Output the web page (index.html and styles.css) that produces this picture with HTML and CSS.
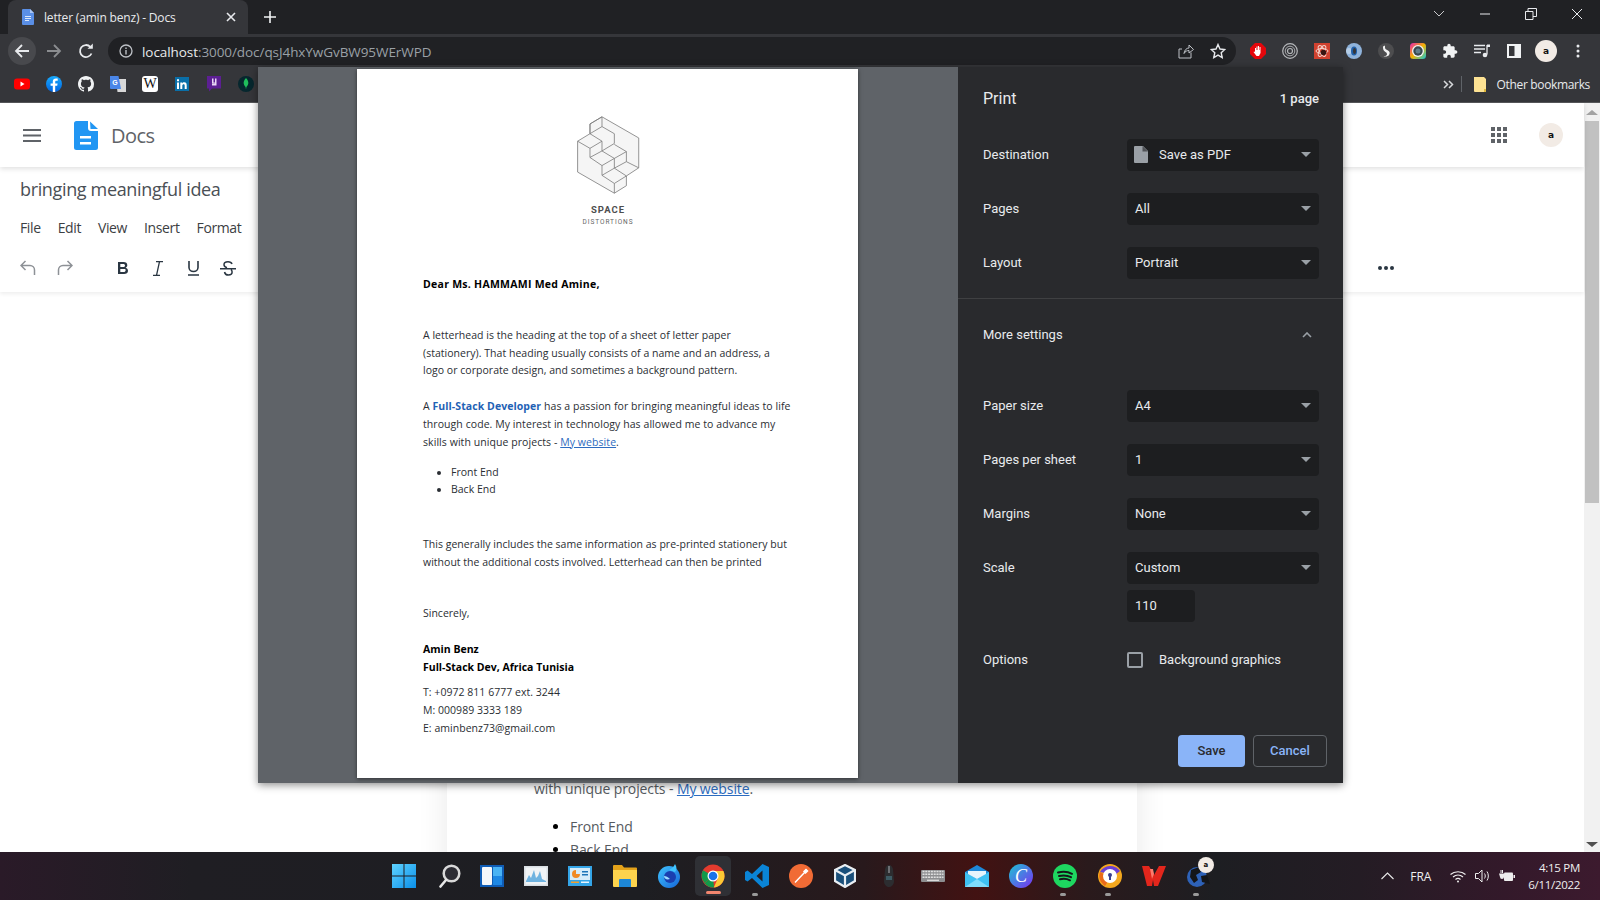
FILE: index.html
```html
<!DOCTYPE html>
<html lang="en">
<head>
<meta charset="utf-8">
<title>letter (amin benz) - Docs</title>
<link rel="stylesheet" href="styles.css">
</head>
<body>
<div class="tabstrip">
  <div class="tab">
    <svg class="tab-icon" viewBox="0 0 12 16"><path d="M1 0h7l4 4v11a1 1 0 0 1-1 1H1a1 1 0 0 1-1-1V1a1 1 0 0 1 1-1z" fill="#5a8fe6"/><path d="M8 0l4 4H8z" fill="#a9c6f5"/><path d="M3 7h6v1H3zM3 9h6v1H3zM3 11h4v1H3z" fill="#dce8fb"/></svg>
    <span class="tab-title">letter (amin benz) - Docs</span>
    <svg class="tab-close" viewBox="0 0 10 10"><path d="M1 1l8 8M9 1l-8 8" stroke="#e8eaed" stroke-width="1.6"/></svg>
  </div>
  <svg class="newtab" viewBox="0 0 12 12"><path d="M6 0v12M0 6h12" stroke="#f1f3f4" stroke-width="1.6"/></svg>
  <div class="winctl">
    <span class="winbtn"><svg width="12" height="8" viewBox="0 0 12 8"><path d="M1 1l5 5 5-5" stroke="#c8c9cb" fill="none"/></svg></span>
    <span class="winbtn"><svg width="12" height="2" viewBox="0 0 12 2"><path d="M1 1h10" stroke="#e8eaed"/></svg></span>
    <span class="winbtn"><svg width="12" height="12" viewBox="0 0 12 12"><path d="M.5 3.500h7.500v8H.5zM3 3.500V.5h8.500v8H8" stroke="#e8eaed" fill="none"/></svg></span>
    <span class="winbtn"><svg width="12" height="12" viewBox="0 0 12 12"><path d="M1 1l10 10M11 1L1 11" stroke="#e8eaed"/></svg></span>
  </div>
</div>

<div class="toolbar">
  <span class="nav nav-on"><svg width="16" height="16" viewBox="0 0 16 16"><path d="M15 8H2M8 2L2 8l6 6" stroke="#e8eaed" stroke-width="1.8" fill="none"/></svg></span>
  <span class="nav"><svg width="16" height="16" viewBox="0 0 16 16"><path d="M1 8h13M8 2l6 6-6 6" stroke="#8b8d90" stroke-width="1.8" fill="none"/></svg></span>
  <span class="nav"><svg width="16" height="16" viewBox="0 0 16 16"><path d="M13.500 10.500A6 6 0 1 1 12.300 3.800" stroke="#e8eaed" stroke-width="1.800" fill="none"/><path d="M9.500 5.800h5.300V.5z" fill="#e8eaed"/></svg></span>
  <div class="omnibox">
    <svg class="info" width="14" height="14" viewBox="0 0 14 14"><circle cx="7" cy="7" r="6" stroke="#bdc1c6" stroke-width="1.300" fill="none"/><path d="M6.300 6h1.400v4.500H6.300zM6.300 3.500h1.400v1.400H6.300z" fill="#bdc1c6"/></svg>
    <span class="url"><span class="url-host">localhost</span>:3000/doc/qsJ4hxYwGvBW95WErWPD</span>
    <svg class="omni-share" width="16" height="16" viewBox="0 0 16 16"><path d="M13 9.500V15H1V6h3M6 10.500C6.500 7 8.500 5 11 5V2l4.500 4.500L11 10V7.500c-2 0-3.800.8-5 3z" stroke="#bdc1c6" fill="none"/></svg>
    <svg class="omni-star" width="16" height="16" viewBox="0 0 16 16"><path d="M8 1.500l2 4.500 4.800.500-3.600 3.200 1 4.800L8 12.100l-4.200 2.400 1-4.800L1.200 6.500 6 6z" stroke="#e8eaed" stroke-width="1.400" fill="none"/></svg>
  </div>
  <div class="exts">
    <span class="ext"><svg width="16" height="16" viewBox="0 0 16 16"><path d="M5 0h6l5 5v6l-5 5H5l-5-5V5z" fill="#e4060b"/><path d="M5 9V5h1v2h.5V3.500h1V7H8V3h1v4h.5V4h1v6l-1.500 3H6.500L3.500 9l.8-.6z" fill="#fff"/></svg></span>
    <span class="ext"><svg width="16" height="16" viewBox="0 0 16 16" fill="none" stroke="#b5b7ba"><circle cx="8" cy="8" r="7.300" stroke-width="1.200"/><circle cx="8" cy="8" r="4.800" stroke-width=".9"/><circle cx="8" cy="8" r="2.500" stroke-width="1.200"/></svg></span>
    <span class="ext"><svg width="16" height="16" viewBox="0 0 16 16"><path d="M0 0h16v16H0z" fill="#d0412f"/><g fill="none" stroke="#f3d2cc"><ellipse cx="8" cy="8" rx="6" ry="2.500"/><ellipse cx="8" cy="8" rx="6" ry="2.500" transform="rotate(60 8 8)"/><ellipse cx="8" cy="8" rx="6" ry="2.500" transform="rotate(120 8 8)"/></g><circle cx="9.500" cy="9.500" r="2.800" fill="#3a1512"/></svg></span>
    <span class="ext"><svg width="16" height="16" viewBox="0 0 16 16"><circle cx="8" cy="8" r="8" fill="#8fb3db"/><circle cx="3" cy="8" r="3" fill="#c5d8ec" opacity=".7"/><ellipse cx="8" cy="8" rx="3" ry="4.500" fill="#1f5fa8"/><ellipse cx="8.500" cy="8" rx="1.500" ry="3" fill="#35363a"/></svg></span>
    <span class="ext"><svg width="16" height="16" viewBox="0 0 16 16"><circle cx="8" cy="8" r="8" fill="#4d4d4f"/><path d="M5 3.500l2-1v2c0 1.500 1 2 3 3s2 3 1 4.500-3.500 2-5.500 1c2 .2 3.500-.3 3.500-2S6 8.500 5.500 7 5 4.500 5 3.500z" fill="#f2f2f2"/></svg></span>
    <span class="ext"><svg width="16" height="16" viewBox="0 0 16 16"><defs><linearGradient id="rb" x1="0" y1="0" x2="1" y2="1"><stop offset="0" stop-color="#e81fb3"/><stop offset=".5" stop-color="#f4b400"/><stop offset="1" stop-color="#12c6d8"/></linearGradient></defs><rect width="16" height="16" rx="3.500" fill="url(#rb)"/><circle cx="8" cy="8" r="6" fill="#f3f3f3"/><circle cx="8" cy="8" r="4.700" fill="#37474f"/><circle cx="8" cy="8" r="2.500" fill="#607d8b"/></svg></span>
    <span class="ext"><svg width="16" height="16" viewBox="0 0 24 24"><path fill="#f1f3f4" d="M20.500 11H19V7c0-1.100-.9-2-2-2h-4V3.500C13 2.120 11.880 1 10.500 1S8 2.120 8 3.500V5H4c-1.100 0-1.990.9-1.990 2v3.800H3.500c1.490 0 2.700 1.210 2.700 2.700s-1.210 2.700-2.700 2.700H2V20c0 1.100.9 2 2 2h3.800v-1.500c0-1.490 1.210-2.700 2.700-2.700 1.490 0 2.700 1.210 2.700 2.700V22H17c1.100 0 2-.9 2-2v-4h1.500c1.380 0 2.500-1.120 2.500-2.500S21.880 11 20.500 11z"/></svg></span>
    <span class="ext"><svg width="16" height="14" viewBox="0 0 16 14"><path d="M0 1.500h11M0 5h11M0 8.500h7" stroke="#e8eaed" stroke-width="1.300"/><path d="M13 1v9.500" stroke="#e8eaed" stroke-width="1.300"/><path d="M13 .5h3v2.500h-3z" fill="#e8eaed"/><circle cx="11" cy="11" r="2.300" fill="#e8eaed"/></svg></span>
    <span class="ext"><svg width="14" height="14" viewBox="0 0 14 14"><path d="M0 0h14v14H0z" fill="#f1f3f4"/><path d="M2 2h5.500v10H2z" fill="#35363a"/></svg></span>
    <span class="ext"><span class="avatar avatar-bar"><span class="avatar-a">a</span></span></span>
    <span class="ext"><svg width="4" height="14" viewBox="0 0 4 14" fill="#e8eaed"><circle cx="2" cy="2" r="1.500"/><circle cx="2" cy="7" r="1.500"/><circle cx="2" cy="12" r="1.500"/></svg></span>
  </div>
</div>

<div class="bookmarks">
  <span class="bm"><svg width="16" height="12" viewBox="0 0 16 12"><rect width="16" height="11" y=".5" rx="3" fill="#f00"/><path d="M6.500 3.500v5l4-2.500z" fill="#fff"/></svg></span>
  <span class="bm"><svg width="16" height="16" viewBox="0 0 16 16"><defs><linearGradient id="fb" x1="0" y1="0" x2="0" y2="1"><stop offset="0" stop-color="#18acfe"/><stop offset="1" stop-color="#0163e0"/></linearGradient></defs><circle cx="8" cy="8" r="8" fill="url(#fb)"/><path d="M9.200 16V9.800h2l.4-2.400H9.200V6c0-.8.3-1.300 1.400-1.300h1.100V2.600c-.5-.1-1.100-.2-1.800-.2-1.900 0-3.100 1.100-3.100 3.200v1.800H4.600v2.400h2.200V16z" fill="#fff"/></svg></span>
  <span class="bm"><svg width="16" height="16" viewBox="0 0 16 16"><path fill="#f1f3f4" d="M8 0C3.580 0 0 3.580 0 8c0 3.540 2.290 6.530 5.470 7.590.4.07.55-.17.55-.38 0-.19-.01-.82-.01-1.490-2.010.37-2.530-.49-2.690-.94-.09-.23-.48-.94-.82-1.130-.28-.15-.68-.52-.01-.53.63-.01 1.080.58 1.230.82.72 1.210 1.870.87 2.330.66.07-.52.28-.87.51-1.070-1.780-.2-3.640-.89-3.640-3.950 0-.87.31-1.590.82-2.150-.08-.2-.36-1.020.08-2.120 0 0 .67-.21 2.200.82.64-.18 1.320-.27 2-.27s1.360.09 2 .27c1.530-1.040 2.200-.82 2.200-.82.44 1.100.16 1.920.08 2.120.51.56.82 1.270.82 2.150 0 3.070-1.870 3.750-3.650 3.950.29.25.54.73.54 1.480 0 1.070-.01 1.930-.01 2.200 0 .21.15.46.55.38A8.013 8.013 0 0 0 16 8c0-4.420-3.580-8-8-8z"/></svg></span>
  <span class="bm"><svg width="16" height="16" viewBox="0 0 16 16"><path d="M6 3h10v13H7.500z" fill="#d8d8d8"/><path d="M0 0h8.500L11 13H1a1 1 0 0 1-1-1z" fill="#4a86e8"/><text x="2.300" y="8.500" class="bm-g">G</text></svg></span>
  <span class="bm"><span class="wiki">W</span></span>
  <span class="bm"><svg width="14" height="14" viewBox="0 0 14 14"><rect width="14" height="14" fill="#0a6fa8"/><path d="M2 5.500h2V12H2zM2 2.300h2v2H2zM5.300 5.500h1.900v.9c.4-.6 1-1.100 2-1.100 1.900 0 2.500 1.200 2.500 3V12h-2V8.700c0-.9-.2-1.500-1-1.500-.9 0-1.400.6-1.400 1.600V12h-2z" fill="#fff"/></svg></span>
  <span class="bm"><svg width="14" height="16" viewBox="0 0 14 16"><path d="M0 0h14v12.500H5l-3 3v-3H0z" fill="#5c1f93"/><path d="M5 2.500h1.500v4H8v-4h1.500V9.500H5V8h3V7.800H5z" fill="#e8d8f5"/></svg></span>
  <span class="bm"><svg width="16" height="16" viewBox="0 0 16 16"><circle cx="8" cy="8" r="8" fill="#06272e"/><path d="M8 2c2 2.200 2.500 4 2.300 5.500-.3 2-1.500 3-1.900 3.400L8 13.500l-.4-2.600C7.200 10.500 6 9.500 5.700 7.500 5.500 6 6 4.200 8 2z" fill="#1fbf5c"/></svg></span>
  <div class="bm-right">
    <svg width="11" height="9" viewBox="0 0 11 9" fill="none" stroke="#d6d8da" stroke-width="1.500"><path d="M1 1l3.500 3.500L1 8M6 1l3.500 3.500L6 8"/></svg>
    <span class="bm-sep"></span>
    <svg width="13" height="15" viewBox="0 0 13 15"><path d="M0 0h10l2 2v13H1a1 1 0 0 1-1-1z" fill="#fde293"/><path d="M10 12h2v3h-2z" fill="#e0b93c"/></svg>
    <span class="bm-label">Other bookmarks</span>
  </div>
</div>

<div class="viewport">
  <div class="pagecol">
    <header class="docs-head">
      <svg class="burger" width="18" height="13" viewBox="0 0 18 13"><path d="M0 1h18M0 6.500h18M0 12h18" stroke="#5f6368" stroke-width="1.800"/></svg>
      <svg class="docs-logo" width="24" height="29" viewBox="0 0 24 29"><path d="M2.500 0H14v7a3 3 0 0 0 3 3h7v16.500a2.500 2.500 0 0 1-2.500 2.500h-19A2.500 2.500 0 0 1 0 26.500v-24A2.500 2.500 0 0 1 2.500 0z" fill="#2196f3"/><path d="M16 .5L24 8h-7.500z" fill="#2196f3"/><path d="M6 15h11v2.600H6zM6 21h11v2.600H6z" fill="#fff"/></svg>
      <span class="docs-name">Docs</span>
      <svg class="apps" width="16" height="16" viewBox="0 0 16 16" fill="#5f6368"><path d="M0 0h4v4H0zM6 0h4v4H6zM12 0h4v4h-4zM0 6h4v4H0zM6 6h4v4H6zM12 6h4v4h-4zM0 12h4v4H0zM6 12h4v4H6zM12 12h4v4h-4z"/></svg>
      <span class="avatar avatar-doc"><span class="avatar-a">a</span></span>
    </header>
    <section class="docs-meta">
      <div class="doc-title">bringing meaningful idea</div>
      <nav class="menu"><span>File</span><span>Edit</span><span>View</span><span>Insert</span><span>Format</span></nav>
      <div class="format-bar">
        <svg class="fb-undo" width="16" height="16" viewBox="0 0 16 16" fill="none" stroke="#8d9196" stroke-width="1.500"><path d="M5.500 1L1 5.500 5.500 10M1 5.500h9a4.500 4.500 0 0 1 4.500 4.500v5"/></svg>
        <svg class="fb-redo" width="16" height="16" viewBox="0 0 16 16" fill="none" stroke="#8d9196" stroke-width="1.500"><path d="M10.500 1L15 5.500 10.500 10M15 5.500H6A4.500 4.500 0 0 0 1.500 10v5"/></svg>
        <svg class="fb-bold" width="14" height="14" viewBox="0 0 14 14"><path d="M2 1h5.500c2.400 0 3.800 1.200 3.800 3.200 0 1.200-.7 2.100-1.700 2.500 1.400.4 2.400 1.400 2.400 3 0 2.100-1.600 3.300-4 3.300H2zm2.300 2v3h2.800c1.200 0 1.900-.5 1.900-1.500S8.300 3 7.100 3zm0 5v3h3.300c1.300 0 2-.6 2-1.500S9.700 8 8.400 8z" fill="#2a3642"/></svg>
        <svg class="fb-italic" width="10" height="15" viewBox="0 0 10 15" fill="none" stroke="#2a3642" stroke-width="1.300"><path d="M3 .7h7M0 14.300h7M6.500 .7L3.500 14.300"/></svg>
        <svg class="fb-under" width="11" height="15" viewBox="0 0 11 15" fill="none" stroke="#2a3642" stroke-width="1.600"><path d="M1 0v6.500a4.500 4 0 0 0 9 0V0M0 14h11"/></svg>
        <svg class="fb-strike" width="16" height="15" viewBox="0 0 16 15" fill="none" stroke="#2a3642" stroke-width="1.500"><path d="M12 3c-.5-1.500-2-2.200-4-2.200-2.500 0-4 1.200-4 3 0 1.500 1 2.400 3 3M4.500 11c.4 2 1.800 3 3.800 3 2.400 0 3.800-1.200 3.800-3 0-1-.4-1.800-1-2.500M0 7.700h16"/></svg>
        <svg class="fb-more" width="16" height="4" viewBox="0 0 16 4" fill="#2a3642"><circle cx="2" cy="2" r="2"/><circle cx="8" cy="2" r="2"/><circle cx="14" cy="2" r="2"/></svg>
      </div>
    </section>
    <div class="doc-canvas">
      <article class="paper">
        <p class="paper-line">with unique projects - <a class="paper-link">My website</a>.</p>
        <ul class="paper-list"><li>Front End</li><li>Back End</li></ul>
      </article>
    </div>
  </div>
  <div class="vscroll">
    <span class="vs-up"></span>
    <span class="vs-thumb"></span>
    <span class="vs-down"></span>
  </div>

  <div class="print-dialog">
    <div class="preview">
      <div class="sheet">
        <svg class="sp-logo" width="65" height="80" viewBox="660 135 200 245" fill="none" stroke="#7c7c7c" stroke-width="2.500" stroke-linejoin="round"><path d="M740 140L853 205V297L815 322V352L778 375L665 310V215L703 192V162z" fill="#f5f5f5"/><path d="M740 140V170M703 162L740 140M703 192L740 170L778 192V222L740 245M665 215L703 237L740 215L703 192M703 237V265L740 290L778 268L740 245L703 265M740 215V245M778 268L815 247L778 225M815 247V278M778 268V298M740 290V320L778 345L815 322L778 298L740 320M778 298L815 278L853 297M778 345V375M703 162V192"/></svg>
        <div class="sp-name">SPACE</div>
        <div class="sp-sub">DISTORTIONS</div>
        <p class="l-dear"><b>Dear Ms. HAMMAMI Med Amine,</b></p>
        <p class="l-p1">A letterhead is the heading at the top of a sheet of letter paper<br>(stationery). That heading usually consists of a name and an address, a<br>logo or corporate design, and sometimes a background pattern.</p>
        <p class="l-p2">A <b class="l-blue">Full-Stack Developer</b> has a passion for bringing meaningful ideas to life<br>through code. My interest in technology has allowed me to advance my<br>skills with unique projects - <a class="l-link">My website</a>.</p>
        <ul class="l-list"><li>Front End</li><li>Back End</li></ul>
        <p class="l-p3">This generally includes the same information as pre-printed stationery but<br>without the additional costs involved. Letterhead can then be printed</p>
        <p class="l-sin">Sincerely,</p>
        <p class="l-sign"><b>Amin Benz<br>Full-Stack Dev, Africa Tunisia</b></p>
        <p class="l-contact">T: +0972 811 6777 ext. 3244<br>M: 000989 3333 189<br>E: aminbenz73@gmail.com</p>
      </div>
    </div>
    <aside class="panel">
      <div class="panel-head"><span class="panel-title">Print</span><span class="panel-count">1 page</span></div>
      <div class="row"><span class="row-label">Destination</span>
        <div class="select select-dest"><svg width="14" height="17" viewBox="0 0 14 17"><path d="M1 0h8l5 5v11a1 1 0 0 1-1 1H1a1 1 0 0 1-1-1V1a1 1 0 0 1 1-1z" fill="#9aa0a6"/><path d="M8.500 0v5.500H14z" fill="#292a2d" opacity=".65"/></svg><span>Save as PDF</span></div></div>
      <div class="row"><span class="row-label">Pages</span><div class="select">All</div></div>
      <div class="row"><span class="row-label">Layout</span><div class="select">Portrait</div></div>
      <div class="panel-rule"></div>
      <div class="more"><span class="row-label">More settings</span><svg width="10" height="6" viewBox="0 0 10 6"><path d="M1 5l4-4 4 4" stroke="#9aa0a6" stroke-width="1.600" fill="none"/></svg></div>
      <div class="row"><span class="row-label">Paper size</span><div class="select">A4</div></div>
      <div class="row"><span class="row-label">Pages per sheet</span><div class="select">1</div></div>
      <div class="row"><span class="row-label">Margins</span><div class="select">None</div></div>
      <div class="row row-scale"><span class="row-label">Scale</span><div class="select">Custom</div></div>
      <div class="row-input"><div class="num">110</div></div>
      <div class="row row-options"><span class="row-label">Options</span><span class="check"></span><span class="check-label">Background graphics</span></div>
      <div class="actions"><button class="btn btn-save">Save</button><button class="btn btn-cancel">Cancel</button></div>
    </aside>
  </div>
</div>

<footer class="taskbar">
  <div class="apps-row">
    <span class="ti"><svg width="24" height="24" viewBox="0 0 24 24"><defs><linearGradient id="win" x1="0" y1="0" x2="1" y2="1"><stop offset="0" stop-color="#5fd3ff"/><stop offset="1" stop-color="#0a8fe8"/></linearGradient></defs><path d="M0 0h11.500v11.500H0zM12.500 0H24v11.500H12.500zM0 12.500h11.500V24H0zM12.500 12.500H24V24H12.500z" fill="url(#win)"/></svg></span>
    <span class="ti ti-search"><svg width="22" height="24" viewBox="0 0 22 24" fill="none"><circle cx="12.500" cy="9.500" r="7.800" stroke="#d9d9d9" stroke-width="2.500" fill="#2c2c33"/><path d="M7 16L1.500 22.500" stroke="#e8e8e8" stroke-width="2.600" stroke-linecap="round"/></svg></span>
    <span class="ti"><svg width="24" height="22" viewBox="0 0 24 22"><rect width="24" height="22" fill="#0f5cb5"/><rect x="2" y="2" width="10" height="18" rx="1" fill="#f5f7fa"/><rect x="13" y="2" width="9" height="9" fill="#4ab3f4"/><rect x="13" y="11" width="9" height="9" fill="#1e88e5"/></svg></span>
    <span class="ti"><svg width="24" height="20" viewBox="0 0 24 20"><rect width="24" height="20" fill="#d9dee3"/><rect x="1.500" y="1.500" width="21" height="17" fill="#f0f3f5"/><path d="M2 15l3-6 2 3 3-8 2 8 2-2 2-5 2 8 4 2v1H2z" fill="#6fb3e0"/></svg></span>
    <span class="ti"><svg width="24" height="20" viewBox="0 0 24 20"><rect width="24" height="20" fill="#34a5e8"/><rect x="2" y="2" width="20" height="12" fill="#d5ecfa"/><path d="M8 4a4 4 0 1 0 4 4H8z" fill="#f08a24"/><path d="M14 5h6v1.500h-6zM14 8h6v1.500h-6z" fill="#1c74b8"/><path d="M3 15.500h8v1.500H3z" fill="#f0a030"/><path d="M13 15.500h8v1.500h-8z" fill="#e8f4fc"/></svg></span>
    <span class="ti"><svg width="24" height="22" viewBox="0 0 24 22"><path d="M0 1a1 1 0 0 1 1-1h8l2 2.500h12a1 1 0 0 1 1 1V8H0z" fill="#e3a21a"/><path d="M0 5h24v16a1 1 0 0 1-1 1H1a1 1 0 0 1-1-1z" fill="#fcd34d"/><path d="M7 14h10a1 1 0 0 1 1 1v7H6v-7a1 1 0 0 1 1-1z" fill="#1d87d6"/></svg></span>
    <span class="ti"><svg width="24" height="24" viewBox="0 0 24 24"><defs><linearGradient id="tb" x1="0" y1="0" x2="1" y2="1"><stop offset="0" stop-color="#40c4ff"/><stop offset="1" stop-color="#1565d8"/></linearGradient></defs><circle cx="12" cy="13" r="11" fill="url(#tb)"/><path d="M18 0c2 3 2 6 0 8l-6-2c2-1 5-3 6-6z" fill="#40c4ff"/><circle cx="13" cy="13" r="6" fill="#1a3fb0"/><path d="M7 12c2 0 4 1 6 3-3 1-6 0-6-3z" fill="#9bdcff"/></svg></span>
    <span class="ti ti-active"><svg width="24" height="24" viewBox="0 0 24 24"><circle cx="12" cy="12" r="11.500" fill="#e33b2e"/><path d="M12 12L3.500 19A11.500 11.500 0 0 1 2 6.300z" fill="#119a4a"/><path d="M12 12l-8.500 7.300A11.500 11.500 0 0 0 13 23.500z" fill="#119a4a"/><path d="M12 7h10.400A11.500 11.500 0 0 1 12.800 23.500L17 14z" fill="#fcc934"/><circle cx="12" cy="12" r="5.500" fill="#fff"/><circle cx="12" cy="12" r="4.300" fill="#1a73e8"/></svg><span class="ti-active-bar"></span></span>
    <span class="ti ti-open"><svg width="24" height="24" viewBox="0 0 24 24"><path d="M17.500 0L24 3v18l-6.500 3L7 14l-4.500 3.500L0 16v-8l2.500-1.500L7 10zM17.500 6.500L11.500 12l6 5.500z" fill="#0a84d6"/></svg></span>
    <span class="ti"><svg width="24" height="24" viewBox="0 0 24 24"><circle cx="12" cy="12" r="12" fill="#f16b35"/><path d="M6 18.500L16 8M17 5.500l1.500 1.500-2 2-1.500-1.500z" stroke="#fff" stroke-width="1.500" fill="#fff"/></svg></span>
    <span class="ti"><svg width="22" height="24" viewBox="0 0 22 24" fill="none"><path d="M11 1l10 5v11l-10 6-10-6V6z" fill="#1a4f7a" stroke="#e9eef3" stroke-width="2.200"/><path d="M1 6l10 5.500L21 6M11 11.500V23" stroke="#e9eef3" stroke-width="2.200"/></svg></span>
    <span class="ti"><svg width="12" height="24" viewBox="0 0 12 24"><path d="M2 6c0-3 2-5 4-5s4 2 4 5l1 11c0 4-3 6-5 6s-5-2-5-6z" fill="#2c2d30"/><path d="M5 2h2v7H5z" fill="#6d6e72"/><path d="M3 12h6v4H3z" fill="#3d5a63"/></svg></span>
    <span class="ti"><svg width="24" height="12" viewBox="0 0 24 12"><rect width="24" height="12" rx="1" fill="#8d8e90"/><path d="M1.500 1.500h21M1.500 4.300h21M1.500 7.200h21" stroke="#e0e0e0" stroke-width="1.500" stroke-dasharray="2 .8"/><path d="M6 10.300h12" stroke="#e0e0e0" stroke-width="1.300"/></svg></span>
    <span class="ti"><svg width="24" height="22" viewBox="0 0 24 22"><path d="M0 7l12-7 12 7v15H0z" fill="#1e88d8"/><path d="M0 7l12 7 12-7v15H0z" fill="#3ec1f3"/><path d="M0 22l12-8 12 8z" fill="#7fdcfb"/><path d="M3 6h18v3l-9 5-9-5z" fill="#e6f4fc"/></svg></span>
    <span class="ti"><svg width="24" height="24" viewBox="0 0 24 24"><defs><linearGradient id="cv" x1="0" y1="0" x2="1" y2="1"><stop offset="0" stop-color="#1cc4d4"/><stop offset="1" stop-color="#7b2ff2"/></linearGradient></defs><circle cx="12" cy="12" r="12" fill="url(#cv)"/><text x="12" y="18" class="cv-c">C</text></svg></span>
    <span class="ti ti-open"><svg width="24" height="24" viewBox="0 0 24 24"><circle cx="12" cy="12" r="12" fill="#1ed760"/><path d="M5 8.500c5-1.300 10-.9 14 1.300M6 12c4-1 8.500-.7 12 1.200M7 15.300c3.500-.8 7-.5 10 1" stroke="#14171a" stroke-width="2" fill="none" stroke-linecap="round"/></svg></span>
    <span class="ti ti-open"><svg width="24" height="24" viewBox="0 0 24 24"><circle cx="12" cy="12" r="12" fill="#f4a81e"/><path d="M2 8A12 12 0 0 1 22 7l-5 4z" fill="#6b3fd4"/><path d="M2 8c-2 5 0 10 5 14l5-8z" fill="#ea6a1a"/><circle cx="12" cy="12" r="7" fill="#fff"/><circle cx="12" cy="11" r="2" fill="#3a3f8f"/><path d="M11 12h2v4h-2z" fill="#3a3f8f"/></svg></span>
    <span class="ti"><svg width="24" height="20" viewBox="0 0 24 20"><path d="M0 0h7l5 9 5-9h7l-8 20h-4l-1-6-1 6H5z" fill="#e3261c"/><path d="M8 3h3l1 5-2 5z" fill="#ff7a6b"/></svg></span>
    <span class="ti ti-open ti-last"><svg width="24" height="24" viewBox="0 0 24 24"><circle cx="11" cy="13" r="10" fill="#2e62b8"/><path d="M5 6l8-3 2 5-5 3 2 5-4 3-4-6zM15 12l6-1 3 9-8-2z" fill="#14161a"/></svg><span class="avatar avatar-task"><span class="avatar-a">a</span></span></span>
  </div>
  <div class="tray">
    <svg class="tr-chev" width="13" height="8" viewBox="0 0 13 8"><path d="M.5 7l6-6 6 6" stroke="#eaeaea" stroke-width="1.100" fill="none"/></svg>
    <span class="tr-lang">FRA</span>
    <svg class="tr-wifi" width="16" height="13" viewBox="0 0 16 13" fill="none" stroke="#eee" stroke-width="1.200"><path d="M.5 4.500C4.500.8 11.500.8 15.500 4.500M3 7c3-2.700 7-2.700 10 0M5.500 9.500c1.500-1.300 3.500-1.300 5 0"/><circle cx="8" cy="11.500" r="1" fill="#eee" stroke="none"/></svg>
    <svg class="tr-vol" width="16" height="14" viewBox="0 0 16 14" fill="none" stroke="#eee"><path d="M.5 4.500h3L7 1v12L3.500 9.500h-3zM9.500 4.500c1 1.500 1 3.500 0 5M12 2.500c1.800 2.800 1.800 6.200 0 9"/></svg>
    <svg class="tr-bat" width="16" height="12" viewBox="0 0 16 12"><path d="M0 3.500h5V7a2 2 0 0 1-2 2 2 2 0 0 1-2-2zM1.500 0h1v3h-1zM3 0h1v3H3z" fill="#eee"/><rect x="5" y="2.500" width="9" height="8.500" rx="1" fill="#eee"/><path d="M14.500 5h1.500v3h-1.500z" fill="#eee"/></svg>
    <div class="clock"><span>4:15 PM</span><span>6/11/2022</span></div>
  </div>
</footer>
</body>
</html>
```

FILE: styles.css
```css
* { box-sizing: border-box; }
html, body { margin: 0; padding: 0; }
body {
  width: 1600px;
  height: 900px;
  overflow: hidden;
  display: flex;
  flex-direction: column;
  font-family: "Open Sans", "Noto Sans", sans-serif;
  background: #fff;
}
svg { display: block; flex: none; }

/* Browser chrome */
.tabstrip {
  height: 34px;
  background: #202124;
  display: flex;
  align-items: flex-end;
  flex: none;
}
.tab {
  width: 240px;
  height: 34px;
  margin-left: 8px;
  padding: 0 12px 0 14px;
  background: #35363a;
  border-radius: 8px 8px 0 0;
  display: flex;
  align-items: center;
  color: #e8eaed;
}
.tab-icon { width: 12px; height: 16px; }
.tab-title { font-size: 12px; margin-left: 10px; flex: 1; white-space: nowrap; letter-spacing: -.18px; }
.tab-close { width: 10px; height: 10px; }
.newtab { width: 12px; height: 12px; margin: 0 0 11px 16px; }
.winctl { margin-left: auto; display: flex; height: 34px; }
.winbtn { width: 46px; display: flex; align-items: center; justify-content: center; padding-bottom: 6px; }

.toolbar {
  height: 34px;
  background: #35363a;
  display: flex;
  align-items: center;
  padding-left: 6px;
  flex: none;
}
.nav { width: 32px; height: 28px; display: flex; align-items: center; justify-content: center; }
.nav-on { background: #48494d; border-radius: 50%; width: 28px; margin: 0 2px; }
.omnibox {
  height: 28px;
  width: 1128px;
  margin-left: 6px;
  background: #202124;
  border-radius: 14px;
  display: flex;
  align-items: center;
  padding: 0 10px 0 11px;
}
.url { font-size: 13.500px; letter-spacing: -.07px; color: #9aa0a6; margin-left: 9px; white-space: nowrap; padding-top: 2px; }
.url-host { color: #e8eaed; }
.omni-share { margin-left: auto; }
.omni-star { margin-left: 16px; }
.exts { display: flex; margin-left: 6px; }
.ext { width: 32px; height: 28px; display: flex; align-items: center; justify-content: center; }
.avatar { border-radius: 50%; background: #f2ebe5; display: flex; align-items: center; justify-content: center; }
.avatar-a { font-family: "DejaVu Sans", sans-serif; font-weight: 700; color: #111; font-size: 9px; line-height: 1; }
.avatar-bar { width: 22px; height: 22px; }

.bookmarks {
  height: 35px;
  background: #35363a;
  border-bottom: 1px solid #56575a;
  display: flex;
  align-items: center;
  padding: 0 0 2px 6px;
  flex: none;
}
.bm { width: 32px; display: flex; justify-content: center; align-items: center; }
.bm-g { font: 700 7px "Liberation Sans", sans-serif; fill: #fff; }
.wiki { width: 16px; height: 16px; background: #fff; border-radius: 3px; color: #111; font: 14px/16px "Liberation Serif", serif; text-align: center; }
.bm-right { margin-left: auto; display: flex; align-items: center; padding-right: 10px; }
.bm-sep { width: 1px; height: 16px; background: #5f6368; margin: 0 12px 0 7px; }
.bm-label { font-size: 12px; letter-spacing: -.34px; color: #e8eaed; margin-left: 10px; white-space: nowrap; }

/* Page */
.viewport { position: relative; flex: 1; display: flex; min-height: 0; }
.pagecol { flex: 1; display: flex; flex-direction: column; min-width: 0; }
.docs-head {
  height: 64px;
  display: flex;
  align-items: center;
  padding-left: 23px;
  background: #fff;
  box-shadow: 0 2px 5px rgba(0,0,0,.12);
  position: relative;
  z-index: 2;
  flex: none;
}
.docs-logo { margin-left: 33px; }
.docs-name { font-size: 20px; letter-spacing: -.5px; color: #5f6368; margin-left: 13px; }
.apps { margin-left: auto; }
.avatar-doc { width: 24px; height: 24px; margin: 0 21px 0 32px; }
.docs-meta {
  height: 125px;
  padding: 0 0 0 20px;
  box-shadow: 0 2px 4px rgba(0,0,0,.07);
  position: relative;
  z-index: 1;
  background: #fff;
  flex: none;
}
.doc-title { font-size: 18px; letter-spacing: -.35px; color: #4a4f55; padding-top: 8px; line-height: 28px; }
.menu { display: flex; gap: 17px; font-size: 14px; letter-spacing: -.38px; color: #3c4043; margin-top: 15px; line-height: 20px; }
.format-bar { display: flex; align-items: center; height: 22px; margin-top: 19px; }
.fb-redo { margin-left: 21px; }
.fb-bold { margin-left: 43px; }
.fb-italic { margin-left: 23px; }
.fb-under { margin-left: 25px; }
.fb-strike { margin-left: 21px; }
.fb-more { margin-left: 1142px; }
.doc-canvas { flex: 1; min-height: 0; overflow: hidden; background: #fff; }
.paper {
  width: 690px;
  height: 700px;
  margin-left: 447px;
  padding: 487px 0 0 87px;
  background: #fff;
  box-shadow: 0 0 30px rgba(0,0,0,.09);
  font-size: 14px;
  color: #555a60;
  letter-spacing: -.1px;
}
.paper-line { margin: 0; line-height: 20px; }
.paper-link { color: #2d6cc0; text-decoration: underline; }
.paper-list { margin: 17px 0 0; padding-left: 36px; line-height: 22.500px; }
.paper-list li::marker { color: #000; }

.vscroll { width: 16px; background: #f1f1f1; display: flex; flex-direction: column; align-items: center; flex: none; height: 749px; }
.vs-up { width: 0; height: 0; border: 6px solid transparent; border-top: 0; border-bottom: 5px solid #a3a3a3; margin: 7px 0 6px; }
.vs-thumb { width: 14px; height: 382px; background: #c1c1c1; }
.vs-down { width: 0; height: 0; border: 6px solid transparent; border-bottom: 0; border-top: 5px solid #505050; margin-top: auto; margin-bottom: 5px; }

/* Print dialog */
.print-dialog {
  position: absolute;
  left: 258px;
  top: -36px;
  width: 1085px;
  height: 716px;
  display: flex;
  box-shadow: 0 2px 8px rgba(0,0,0,.45);
  z-index: 5;
}
.preview { width: 700px; background: #5f6368; padding: 2px 0 0 99px; flex: none; }
.sheet {
  width: 501px;
  height: 709px;
  background: #fff;
  padding: 46px 66px 0;
  box-shadow: 0 1px 4px rgba(0,0,0,.5);
  font-family: "Open Sans", sans-serif;
  font-size: 10.500px;
  line-height: 18px;
  color: #2a2e33;
  display: flex;
  flex-direction: column;
}
.sheet p { margin: 0; }
.sheet b { color: #000; }
.sp-logo { margin-left: 153px; }
.sp-name { margin-top: 8px; margin-left: 95px; text-align: center; width: 180px; font: 700 9.500px/13px Roboto, sans-serif; letter-spacing: 1px; color: #4e4e4e; }
.sp-sub { margin-left: 95px; text-align: center; width: 180px; font: 6.500px/13px Roboto, sans-serif; letter-spacing: .95px; color: #666; }
.sheet .l-dear { margin-top: 46px; letter-spacing: .27px; }
.sheet .l-p1 { margin-top: 34px; letter-spacing: .03px; line-height: 17.700px; }
.sheet .l-p2 { margin-top: 18px; letter-spacing: .07px; line-height: 17.700px; }
.sheet .l-blue { color: #1f62b5; }
.l-link { color: #2d6cc0; text-decoration: underline; }
.l-list { margin: 13px 0 0; padding-left: 28px; line-height: 17px; }
.sheet .l-p3 { margin-top: 38px; letter-spacing: .02px; line-height: 17.700px; }
.sheet .l-sin { margin-top: 32.500px; }
.sheet .l-sign { margin-top: 18px; }
.sheet .l-contact { margin-top: 7px; letter-spacing: .03px; }

.panel {
  width: 385px;
  background: #292a2d;
  padding: 0 0 0 1px;
  font-family: Roboto, sans-serif;
  font-size: 13px;
  color: #e8eaed;
  display: flex;
  flex-direction: column;
  flex: none;
}
.panel-head { display: flex; justify-content: space-between; align-items: center; padding: 0 24px; height: 60px; margin-top: 1px; }
.panel-title { font-size: 16px; }
.panel-count { font-weight: 500; }
.row { display: flex; align-items: center; padding: 0 24px; height: 32px; margin-top: 22px; }
.panel-head + .row { margin-top: 11px; }
.row-label { width: 144px; flex: none; white-space: nowrap; padding-bottom: 2px; }
.select {
  width: 192px;
  height: 32px;
  background: #1d1e20;
  border-radius: 4px;
  display: flex;
  align-items: center;
  padding: 0 0 2px 8px;
  position: relative;
}
.select::after {
  content: "";
  position: absolute;
  right: 8px;
  top: 13px;
  border: 5px solid transparent;
  border-bottom: 0;
  border-top: 5px solid #9aa0a6;
}
.select-dest { padding: 0 0 2px 7px; gap: 11px; }
.panel-rule { height: 1px; background: #3f4042; margin: 19px 0 0 -1px; }
.more { display: flex; align-items: center; justify-content: space-between; padding: 0 31px 0 24px; margin-top: 27px; height: 18px; }
.more + .row { margin-top: 46px; }
.row-input { padding-left: 168px; margin-top: 6px; }
.num { width: 68px; height: 32px; background: #1d1e20; border-radius: 4px; padding: 0 0 2px 8px; display: flex; align-items: center; }
.row-options { margin-top: 22px; height: 32px; }
.check { width: 16px; height: 16px; border: 2px solid #9aa0a6; border-radius: 2px; flex: none; }
.check-label { margin-left: 16px; white-space: nowrap; padding-bottom: 2px; }
.actions { margin-top: auto; margin-bottom: 16px; padding-right: 16px; display: flex; justify-content: flex-end; gap: 8px; }
.btn { height: 32px; border-radius: 4px; font: 500 13px Roboto, sans-serif; cursor: default; padding: 0 0 2px; }
.btn-save { width: 67px; background: #8ab4f8; border: 0; color: #292a2d; }
.btn-cancel { width: 74px; background: transparent; border: 1px solid #5f6368; color: #8ab4f8; }

/* Taskbar */
.taskbar {
  height: 48px;
  flex: none;
  display: flex;
  align-items: center;
  position: relative;
  z-index: 6;
  background: linear-gradient(90deg, #2a1a28 0%, #1f1e23 12%, #1d1e22 40%, #28191c 54%, #421212 61%, #2a1a1c 68%, #1d1e22 76%, #241c24 85%, #33192a 94%, #3c1a2e 100%);
  color: #f0f0f0;
}
.apps-row { display: flex; margin-left: 382px; }
.ti { width: 44.100px; height: 40px; display: flex; align-items: center; justify-content: center; position: relative; }
.ti-search svg { margin-left: 3px; }
.ti-active { background: #2f3035; border-radius: 5px; width: 36px; margin: 0 4.050px; }
.ti-active-bar { position: absolute; bottom: 2px; left: 11px; width: 15px; height: 3px; border-radius: 2px; background: #f2866f; }
.ti-open::after { content: ""; position: absolute; bottom: 0; left: 17px; width: 6px; height: 3px; border-radius: 2px; background: #9a9a9a; }
.avatar-task { position: absolute; right: 6px; top: 1px; width: 16px; height: 16px; }
.avatar-task .avatar-a { font-size: 7px; }
.cv-c { font: italic 18px "Liberation Serif", serif; fill: #fff; text-anchor: middle; }
.tray { margin-left: auto; display: flex; align-items: center; padding-right: 20px; }
.tr-lang { font: 12px "Open Sans", sans-serif; margin-left: 16px; width: 30px; }
.tr-wifi { margin-left: 10px; }
.tr-vol { margin-left: 9px; }
.tr-bat { margin-left: 8px; }
.clock { display: flex; flex-direction: column; align-items: flex-end; font-size: 11.500px; letter-spacing: -.3px; line-height: 17px; margin-left: 13px; }
```
